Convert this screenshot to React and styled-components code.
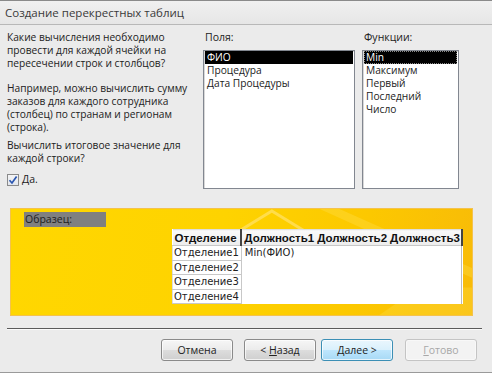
import React from "react";
import styled, { createGlobalStyle } from "styled-components";

const Global = createGlobalStyle`
  html, body { margin: 0; padding: 0; background: #ebebeb; }
  * { box-sizing: border-box; }
`;

const fields = ["ФИО", "Процедура", "Дата Процедуры"];
const funcs = ["Min", "Максимум", "Первый", "Последний", "Число"];
const depts = ["Отделение1", "Отделение2", "Отделение3", "Отделение4"];

export default function App() {
  return (
    <Window>
      <Global />
      <TitleBar>Создание перекрестных таблиц</TitleBar>

      <Top>
        <Info>
          <Para $gap={12}>Какие вычисления необходимо провести для каждой ячейки на пересечении строк и столбцов?</Para>
          <Para $gap={5}>Например, можно вычислить сумму заказов для каждого сотрудника (столбец) по странам и регионам (строка).</Para>
          <Para $gap={0}>Вычислить итоговое значение для каждой строки?</Para>
          <Check>
            <Box>
              <svg width="10" height="10" viewBox="0 0 10 10">
                <path d="M1.5 5.2 L4 8 L8.6 1.6" fill="none" stroke="#2a55b0" strokeWidth="1.7" />
              </svg>
            </Box>
            <span><u>Д</u>а.</span>
          </Check>
        </Info>

        <Column $w={152}>
          <Label>Поля:</Label>
          <List>
            {fields.map((f, i) => (
              <Item key={f} $sel={i === 0}>{f}</Item>
            ))}
          </List>
        </Column>

        <Column $w={97} $ml={7}>
          <Label>Функции:</Label>
          <List>
            {funcs.map((f, i) => (
              <Item key={f} $sel={i === 0} $focus={i === 0}>{f}</Item>
            ))}
          </List>
        </Column>
      </Top>

      <Sample>
        <Chevron viewBox="0 0 463 108" preserveAspectRatio="none">
          <path d="M230 22 L262 2 L294 22" fill="none" stroke="#ffe36a" strokeWidth="3" opacity="0.7" />
          <path d="M330 0 L463 60 L463 70 L310 0 Z" fill="#ffe04d" opacity="0.35" />
          <path d="M370 108 L410 80 L463 80 L463 108 Z" fill="#ffe04d" opacity="0.3" />
        </Chevron>
        <SampleLabel>Образец:</SampleLabel>
        <Table>
          <thead>
            <tr>
              <Th $first>Отделение</Th>
              <Th>Должность1</Th>
              <Th>Должность2</Th>
              <Th $last>Должность3</Th>
            </tr>
          </thead>
          <tbody>
            {depts.map((d, i) => (
              <tr key={d}>
                <RowHead>{d}</RowHead>
                {i === 0 ? <Cell colSpan={3} rowSpan={4}>Min(ФИО)</Cell> : null}
              </tr>
            ))}
          </tbody>
        </Table>
      </Sample>

      <Separator />

      <Buttons>
        <Button>Отмена</Button>
        <Button><span>&lt; <u>Н</u>азад</span></Button>
        <Button $default>
          <span><u>Д</u>алее &gt;</span>
        </Button>
        <Button $disabled>
          <span><u>Г</u>отово</span>
        </Button>
      </Buttons>
    </Window>
  );
}

const Window = styled.div`
  width: 492px;
  height: 373px;
  background: #ebebeb;
  border-top: 1px solid #8a8a8a;
  border-bottom: 1px solid #9a9a9a;
  font-family: "Open Sans", "Noto Sans", sans-serif;
  font-size: 10.5px;
  color: #222;
  display: flex;
  flex-direction: column;
  overflow: hidden;
`;

const TitleBar = styled.div`
  height: 24px;
  padding-left: 5px;
  display: flex;
  align-items: center;
  font-size: 11.5px;
  color: #3a3a3a;
  background: linear-gradient(#f0f0f0, #e6e6e6);
  border-bottom: 1px solid #b8b8b8;
`;

const Top = styled.div`
  display: flex;
  height: 183px;
  padding: 6px 0 0 7px;
`;

const Info = styled.div`
  width: 196px;
  font-size: 10.2px;
  line-height: 13px;
`;

const Para = styled.p`
  margin: 0 0 ${(p) => p.$gap}px 0;
`;

const Check = styled.div`
  display: flex;
  align-items: center;
  gap: 3px;
  margin-top: 8px;
  font-size: 10.5px;
`;

const Box = styled.div`
  width: 12px;
  height: 12px;
  border: 1px solid #8a8a8a;
  background: linear-gradient(#f4f4f4, #e2e6ee);
  display: flex;
  align-items: center;
  justify-content: center;
`;

const Column = styled.div`
  width: ${(p) => p.$w}px;
  margin-left: ${(p) => p.$ml || 0}px;
  display: flex;
  flex-direction: column;
`;

const Label = styled.div`
  height: 19px;
  padding-left: 2px;
  line-height: 13px;
`;

const List = styled.div`
  height: 139px;
  background: #fff;
  border: 1px solid #828790;
  box-shadow: inset 1px 1px 0 #d8d8d8;
  padding: 0 1px;
`;

const Item = styled.div`
  height: 13px;
  line-height: 13px;
  padding-left: 2px;
  font-size: 10.2px;
  background: ${(p) => (p.$sel ? "#000" : "transparent")};
  color: ${(p) => (p.$sel ? "#fff" : "#222")};
  outline: ${(p) => (p.$focus ? "1px dotted #888" : "none")};
  outline-offset: -1px;
`;

const Sample = styled.div`
  position: relative;
  margin-left: 10px;
  width: 463px;
  height: 108px;
  border: 1px solid #f4c24c;
  background: linear-gradient(100deg, #ffd700 0%, #fed300 45%, #fcc800 75%, #f8bb08 100%);
  padding: 3px 0 0 13px;
`;

const Chevron = styled.svg`
  position: absolute;
  left: 0;
  top: 0;
  width: 100%;
  height: 100%;
`;

const SampleLabel = styled.div`
  position: relative;
  width: 82px;
  height: 15px;
  line-height: 15px;
  background: #808080;
  color: #1e1e1e;
  padding-left: 1px;
`;

const Table = styled.table`
  position: relative;
  margin: 2px 0 0 148px;
  border-collapse: collapse;
  background: #fff;
  font-family: "DejaVu Sans", sans-serif;
  font-size: 10px;
  color: #222;
`;

const Th = styled.th`
  height: 16px;
  padding: 0 ${(p) => (p.$first ? 3 : 1)}px 0 2px;
  text-align: left;
  background: linear-gradient(#fafafa, #ececec);
  font-family: "Liberation Sans", sans-serif;
  font-size: 11.5px;
  color: #111;
  border-right: ${(p) => (p.$first || p.$last ? "2px solid #444" : "0")};
  border-bottom: 1px solid #c8c8c8;
  border-top: 1px solid #ddd;
  white-space: nowrap;
`;

const RowHead = styled.td`
  height: 14.5px;
  padding: 0 2px 0 1px;
  border: 1px solid #c8c8c8;
  border-left: 1px solid #ddd;
  white-space: nowrap;
`;

const Cell = styled.td`
  vertical-align: top;
  padding: 1px 3px;
  border-right: 1px solid #bbb;
`;

const Separator = styled.div`
  margin: 12px 10px 0 7px;
  height: 2px;
  border-top: 1px solid #5a5a5a;
  border-bottom: 1px solid #fafafa;
`;

const Buttons = styled.div`
  display: flex;
  justify-content: flex-end;
  padding: 9px 15px 0 0;
  & > :nth-child(2) { margin-left: 11px; }
  & > :nth-child(3) { margin-left: 5px; }
  & > :nth-child(4) { margin-left: 12px; }
`;

const Button = styled.div`
  width: 72px;
  height: 22px;
  display: flex;
  align-items: center;
  justify-content: center;
  border-radius: 3px;
  font-size: 10.5px;
  white-space: pre;
  color: ${(p) => (p.$disabled ? "#a8a8a8" : "#222")};
  border: 1px solid ${(p) => (p.$default ? "#3c8fb5" : p.$disabled ? "#c4c4c4" : "#8a8a8a")};
  background: ${(p) =>
    p.$disabled
      ? "#f3f3f3"
      : p.$default
      ? "linear-gradient(#eaf6fd 0%, #d9f0fc 50%, #bee6fd 51%, #a7d9f5 100%)"
      : "linear-gradient(#f6f6f6 0%, #ebebeb 50%, #dddddd 51%, #cfcfcf 100%)"};
  box-shadow: inset 0 0 0 1px ${(p) => (p.$disabled ? "#f8f8f8" : "rgba(255,255,255,0.7)")};
`;
